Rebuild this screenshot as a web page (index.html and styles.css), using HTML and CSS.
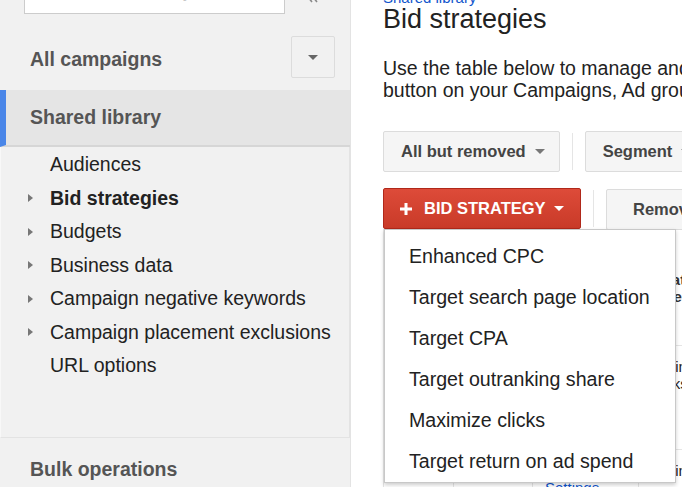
FILE: index.html
```html
<!DOCTYPE html>
<html lang="en">
<head>
    <meta charset="UTF-8">
    <meta name="viewport" content="width=device-width, initial-scale=1.0">
    <title>Bid strategies - Shared library</title>
    <link rel="stylesheet" href="styles.css">
</head>
<body>

<div class="page">
    <aside class="sidebar">
        <div class="search-row">
            <div class="search-box"><span class="search-hint">Search shared library</span></div>
            <svg class="collapse" width="11" height="12" viewBox="0 0 11 12">
                <path d="M5 1 L1 6 L5 11 M10 1 L6 6 L10 11" fill="none" stroke="#888" stroke-width="1.6"/>
            </svg>
        </div>

        <div class="nav-head campaigns">
            <span class="label">All campaigns</span>
            <button class="nav-toggle"><span class="caret"></span></button>
        </div>

        <div class="nav-head shared">Shared library</div>

        <ul class="nav-list">
            <li><span class="twisty"></span>Audiences</li>
            <li class="current"><span class="twisty arrow"></span>Bid strategies</li>
            <li><span class="twisty arrow"></span>Budgets</li>
            <li><span class="twisty arrow"></span>Business data</li>
            <li><span class="twisty arrow"></span>Campaign negative keywords</li>
            <li><span class="twisty arrow"></span>Campaign placement exclusions</li>
            <li><span class="twisty"></span>URL options</li>
        </ul>

        <div class="nav-head bulk">Bulk operations</div>
    </aside>

    <main class="content">
        <a class="crumb" href="#">Shared library</a>
        <h1>Bid strategies</h1>
        <p class="intro">Use the table below to manage and view the performance of your bid strategies. To apply a strategy, use the Edit<br>button on your Campaigns, Ad groups, or Keywords tabs.</p>

        <div class="toolbar">
            <button class="btn">All but removed <span class="caret"></span></button>
            <span class="sep"></span>
            <button class="btn">Segment <span class="caret"></span></button>
        </div>

        <div class="toolbar">
            <div class="menu-wrap">
                <button class="btn btn-red">
                    <svg class="plus" width="12" height="12" viewBox="0 0 12 12">
                        <path d="M6 0 V12 M0 6 H12" stroke="#fff" stroke-width="3"/>
                    </svg>
                    BID STRATEGY <span class="caret"></span>
                </button>
                <ul class="menu">
                    <li>Enhanced CPC</li>
                    <li>Target search page location</li>
                    <li>Target CPA</li>
                    <li>Target outranking share</li>
                    <li>Maximize clicks</li>
                    <li>Target return on ad spend</li>
                </ul>
            </div>
            <span class="sep"></span>
            <button class="btn btn-remove">Remove</button>
        </div>

        <table class="grid">
            <tr class="head">
                <td class="c1"></td>
                <td class="c2">Status</td>
                <td class="c3">Name</td>
                <td class="c4">Strategy<br>type</td>
            </tr>
            <tr>
                <td></td>
                <td>Active</td>
                <td>Clicks plan</td>
                <td>Optimize<br>clicks</td>
            </tr>
            <tr>
                <td></td>
                <td>Active</td>
                <td>Main plan<br><a href="#">Settings</a></td>
                <td>Optimize</td>
            </tr>
        </table>
    </main>
</div>

</body>
</html>
```

FILE: styles.css
```css
body {
    margin: 0;
    height: 487px;
    overflow: hidden;
    font-family: "Liberation Sans", Arial, sans-serif;
    color: #222;
    background-color: #fff;
}

.page {
    display: flex;
    margin-top: -20px;
    height: 507px;
    overflow: hidden;
}

/* left navigation */

.sidebar {
    width: 350px;
    flex-shrink: 0;
    background-color: #f1f1f1;
    border-right: 1px solid #e3e3e3;
}

.search-row {
    display: flex;
    padding: 4px 0 0 24px;
}

.search-box {
    width: 259px;
    height: 28px;
    background-color: #fff;
    border: 1px solid #ccc;
    overflow: hidden;
}

.search-hint {
    display: block;
    padding: 0 0 0 14px;
    font-size: 16px;
    line-height: 16px;
    color: #c8c8c8;
}

.collapse {
    align-self: flex-end;
    margin: 0 0 11px 22px;
}

.nav-head {
    font-size: 19.5px;
    font-weight: bold;
    color: #555;
}

.campaigns {
    display: flex;
    justify-content: space-between;
    align-items: center;
    height: 42px;
    margin: 22px 0 12px;
    padding: 0 15px 0 30px;
}

.campaigns .label {
    margin-top: 5px;
}

.nav-toggle {
    width: 44px;
    height: 42px;
    padding: 0;
    background-color: #f1f1f1;
    border: 1px solid #dcdcdc;
    border-radius: 2px;
    display: flex;
    justify-content: center;
    align-items: center;
}

.nav-toggle .caret {
    border-top-color: #666;
}

.shared {
    height: 55px;
    line-height: 55px;
    padding-left: 24px;
    border-left: 6px solid #4a86e8;
    background-color: #e5e5e5;
    border-bottom: 2px solid #d6d6d6;
}

.nav-list {
    list-style: none;
    margin: 0;
    padding: 1px 0 54px;
    border: 1px solid #e3e3e3;
    border-top: none;
    border-left-color: #f8f8f8;
}

.nav-list li {
    display: flex;
    align-items: center;
    height: 33.5px;
    padding-left: 27px;
    font-size: 19.5px;
    color: #222;
}

.nav-list li.current {
    font-weight: bold;
}

.twisty {
    width: 22px;
    flex-shrink: 0;
}

.twisty.arrow::before {
    content: "";
    display: block;
    width: 0;
    height: 0;
    border-left: 5px solid #777;
    border-top: 4px solid transparent;
    border-bottom: 4px solid transparent;
}

.bulk {
    height: 55px;
    line-height: 55px;
    margin-top: 4px;
    padding-left: 30px;
}

/* main area */

.content {
    flex: 1;
    min-width: 0;
    overflow: hidden;
    padding: 10px 0 0 32px;
}

.crumb {
    display: block;
    font-size: 15px;
    line-height: 16px;
    color: #1155cc;
    text-decoration: none;
}

h1 {
    margin: 1px 0 0;
    font-size: 27px;
    line-height: 24px;
    font-weight: normal;
    color: #222;
}

.intro {
    margin: 26px 0 0;
    font-size: 19.5px;
    line-height: 22px;
    white-space: nowrap;
    color: #222;
}

.toolbar {
    display: flex;
    align-items: stretch;
    height: 41px;
    white-space: nowrap;
}

.intro + .toolbar {
    margin-top: 30px;
}

.toolbar + .toolbar {
    margin-top: 16px;
}

.btn {
    display: flex;
    align-items: center;
    flex-shrink: 0;
    height: 41px;
    padding: 0 14px 0 17px;
    font-family: inherit;
    font-size: 16.5px;
    font-weight: bold;
    color: #444;
    background-color: #f5f5f5;
    border: 1px solid #dcdcdc;
    border-radius: 2px;
}

.btn .caret {
    margin-left: 9px;
}

.caret {
    display: inline-block;
    width: 0;
    height: 0;
    border-top: 5px solid #777;
    border-left: 5px solid transparent;
    border-right: 5px solid transparent;
}

.sep {
    width: 1px;
    flex-shrink: 0;
    margin: 2px 12px;
    background-color: #e5e5e5;
}

.menu-wrap {
    position: relative;
}

.btn-red {
    width: 198px;
    padding: 0 0 0 16px;
    color: #fff;
    background: linear-gradient(#dd4b39, #c93a28);
    border-color: #b0281a;
}

.btn-red .plus {
    margin-right: 12px;
}

.btn-red .caret {
    margin-left: 8px;
    border-top-color: #fff;
}

.btn-remove {
    padding: 0 26px;
    margin-top: 1px;
}

.menu {
    position: absolute;
    top: 41px;
    left: 1px;
    z-index: 5;
    width: 290px;
    margin: 0;
    padding: 6px 0 0;
    list-style: none;
    background-color: #fff;
    border: 1px solid #c8c8c8;
    box-shadow: 0 2px 4px rgba(0, 0, 0, 0.2);
}

.menu li {
    height: 41px;
    line-height: 41px;
    padding-left: 24px;
    font-size: 19.6px;
    color: #222;
    white-space: nowrap;
}

/* table behind the menu */

.grid {
    table-layout: fixed;
    width: 396px;
    border-collapse: collapse;
    font-size: 15px;
    line-height: 17px;
    white-space: nowrap;
}

.grid td {
    border: 1px solid #e5e5e5;
    padding: 12px;
    vertical-align: top;
    height: 79px;
    overflow: hidden;
}

.grid .head td {
    height: 91px;
    vertical-align: middle;
    font-weight: bold;
    color: #333;
}

.grid .c1 { width: 45px; }
.grid .c2 { width: 54px; }
.grid .c3 { width: 81px; }
.grid .c4 { width: 120px; }

.grid a {
    color: #1155cc;
    text-decoration: none;
}
```
